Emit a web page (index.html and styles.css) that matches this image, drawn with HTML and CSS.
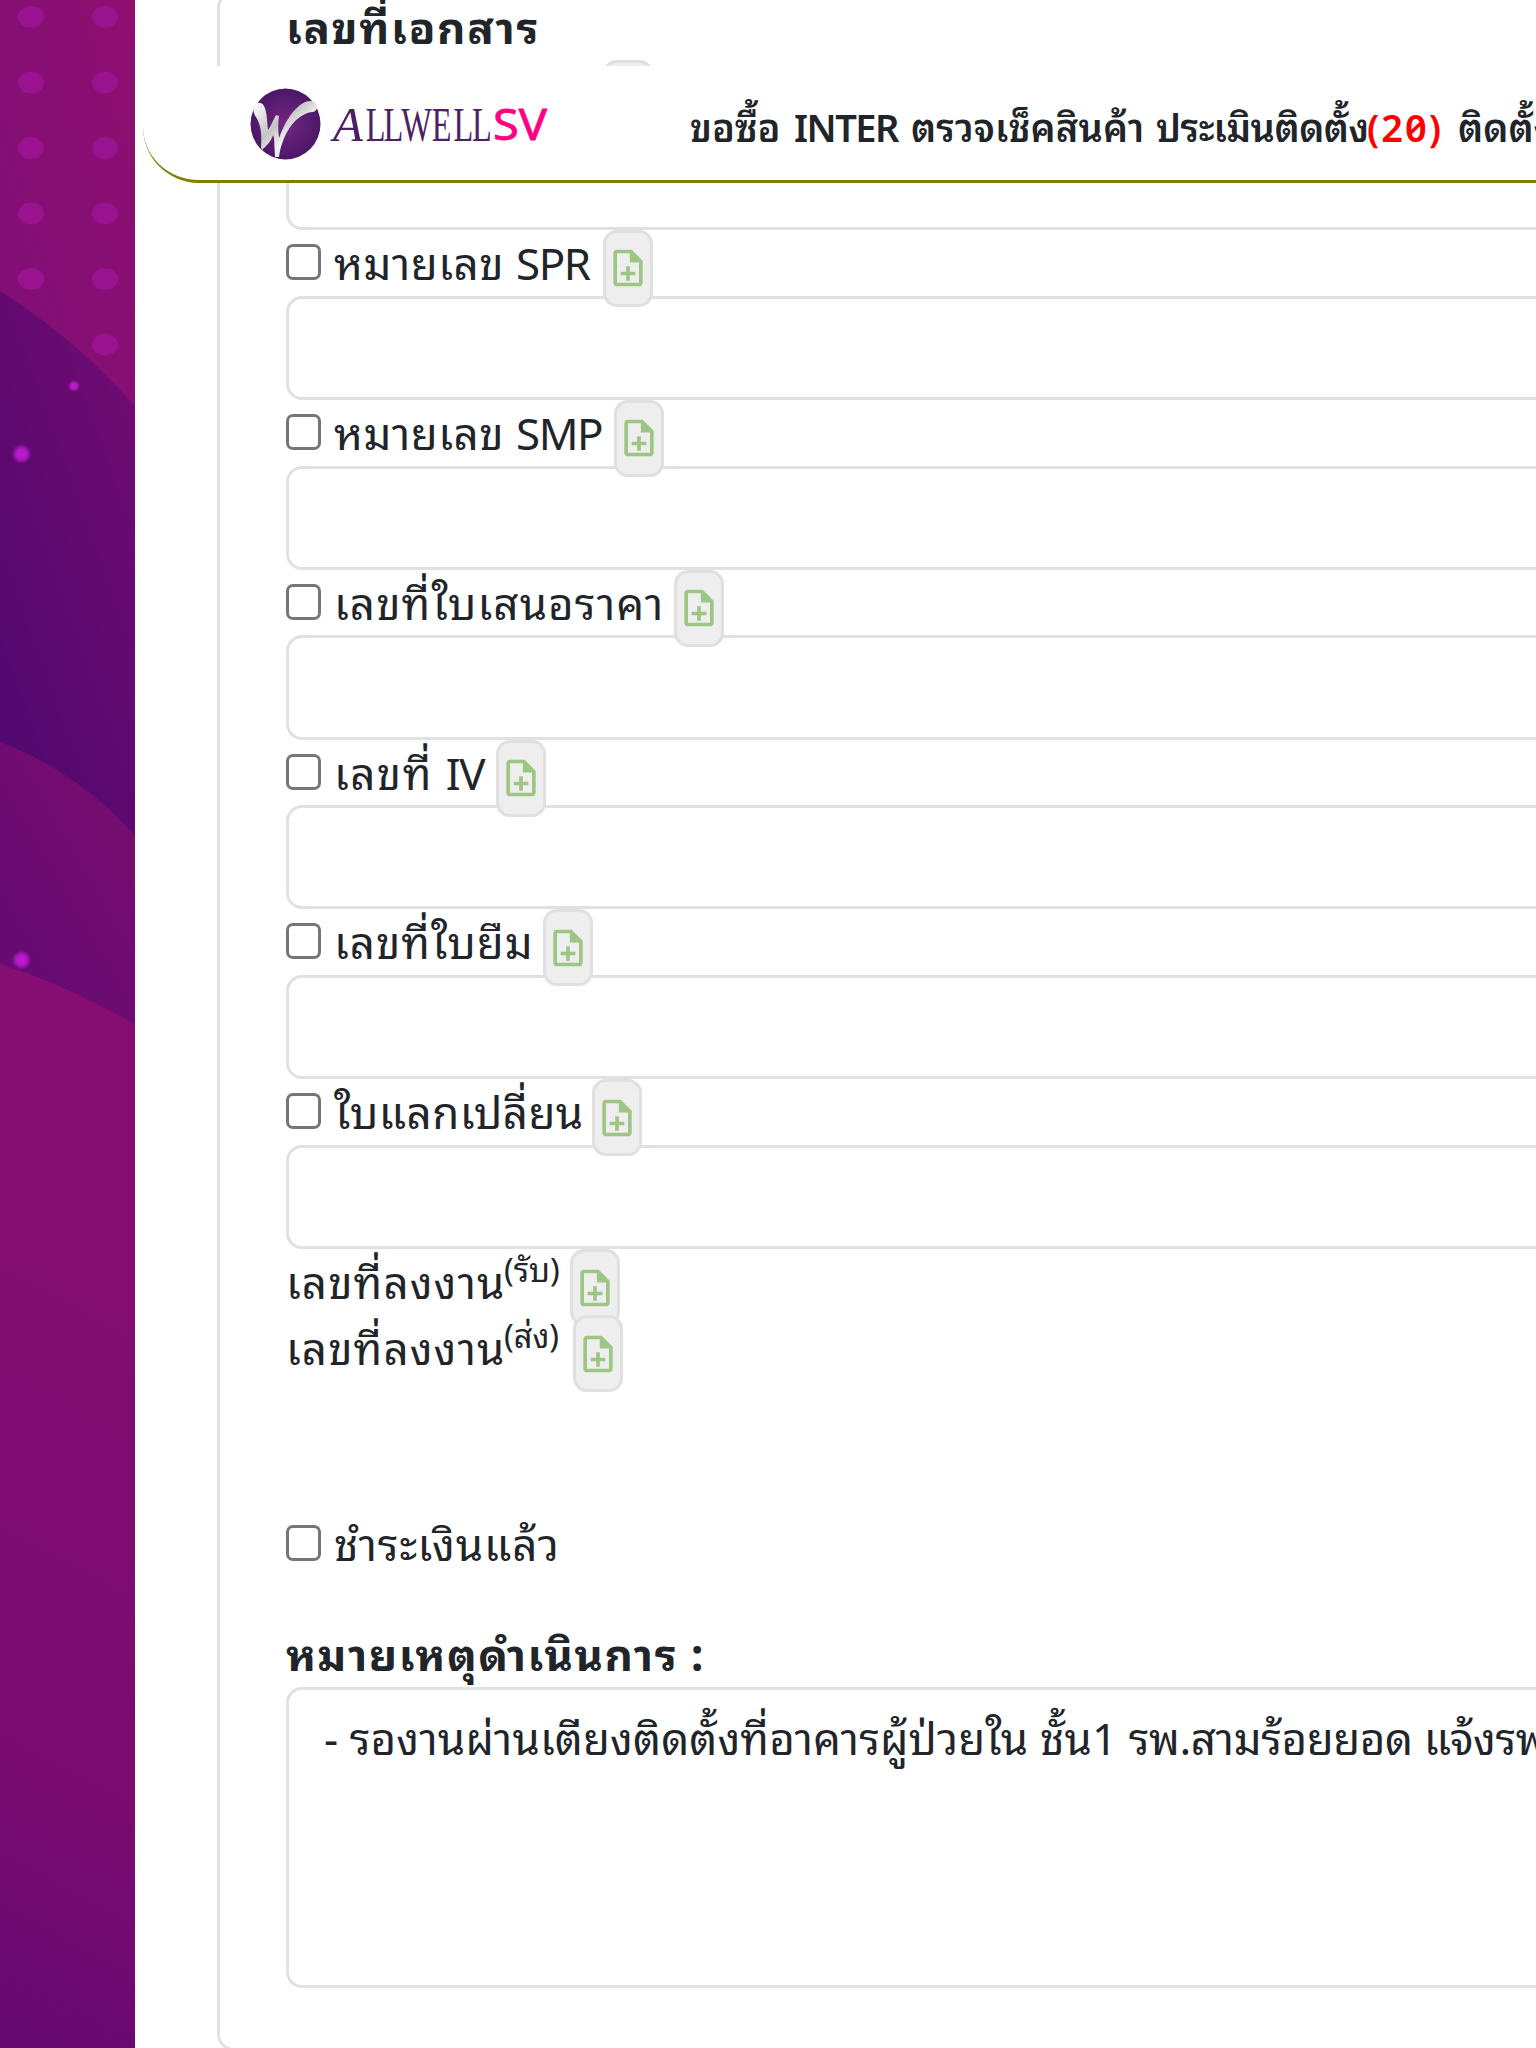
FILE: index.html
```html
<!DOCTYPE html>
<html lang="th">
<head>
<meta charset="utf-8">
<title>ALLWELL SV</title>
<link rel="stylesheet" href="styles.css">
</head>
<body>
<svg width="0" height="0" class="defs">
  <symbol id="note-add" viewBox="0 0 24 24"><path d="M13 11h-2v3H8v2h3v3h2v-3h3v-2h-3zM14 2H6C4.900 2 4 2.900 4 4v16c0 1.100.890 2 1.990 2H18c1.100 0 2-.9 2-2V8zM18 20H6V4h7v5h5z"/></symbol>
</svg>
<header class="topbar">
  <div class="brand">
    <svg class="brand-mark" viewBox="0 0 71 72">
      <defs>
        <radialGradient id="orb"><stop offset="0" stop-color="#752783"/><stop offset="1" stop-color="#4b1768"/></radialGradient>
        <linearGradient id="silver" x1="0" y1="0" x2="1" y2="1"><stop offset="0" stop-color="#fff"/><stop offset=".4" stop-color="#c4c4c4"/><stop offset=".6" stop-color="#f2f2f2"/><stop offset="1" stop-color="#bbb"/></linearGradient>
      </defs>
      <ellipse cx="35.500" cy="36" rx="35" ry="35.500" fill="url(#orb)"/>
      <path fill="url(#silver)" d="M4 17C7 14 12 14 14 18C17 24 17 32 18 42C21 38 23 32 26 27L29 28C28 35 28 43 29 50C35 34 43 20 55 14C60 12 64 13 66 16C68 19 67 23 63 24C48 25 33 42 29 69L25 69L24 50L23 47C21 54 16 58 12 62L11 59C12 47 11 37 6 29C3 25 3 20 4 17Z"/>
    </svg>
    <svg class="brand-name" viewBox="0 0 224 60"><text class="allwell slant" x="3" y="43">A</text><text class="allwell" transform="translate(0 43) scale(.66 1)" x="54 81 108 154 187 215">LLWELL</text><text class="sv" x="163" y="42" textLength="54" lengthAdjust="spacingAndGlyphs">SV</text></svg>
  </div>
  <nav class="menu">
    <a class="m1">ขอซื้อ</a><a class="m2">INTER</a><a class="m3">ตรวจเช็คสินค้า</a><a class="m4">ประเมินติดตั้ง</a><a class="m5">(20)</a><a class="m6">ติดตั้ง</a>
  </nav>
</header>
<div class="page">
  <svg class="side" viewBox="0 0 135 2048" preserveAspectRatio="none">
    <defs>
      <linearGradient id="g1" x1="0" y1="1" x2="1" y2="0"><stop offset="0" stop-color="#7e0f77"/><stop offset="1" stop-color="#8f0f70"/></linearGradient>
      <linearGradient id="g2" gradientUnits="userSpaceOnUse" x1="0" y1="700" x2="220" y2="620"><stop offset="0" stop-color="#52086f"/><stop offset="1" stop-color="#6f0c71"/></linearGradient>
      <linearGradient id="g3" gradientUnits="userSpaceOnUse" x1="0" y1="920" x2="120" y2="850"><stop offset="0" stop-color="#660b72"/><stop offset="1" stop-color="#750c70"/></linearGradient>
      <linearGradient id="g4" gradientUnits="userSpaceOnUse" x1="0" y1="2048" x2="400" y2="1300"><stop offset="0" stop-color="#650a72"/><stop offset=".3" stop-color="#790b70"/><stop offset="1" stop-color="#860e72"/></linearGradient>
      <radialGradient id="dot"><stop offset="0" stop-color="#c31bd0"/><stop offset=".5" stop-color="#b319c6"/><stop offset="1" stop-color="#b319c6" stop-opacity="0"/></radialGradient>
    </defs>
    <rect width="135" height="450" fill="url(#g1)"/>
    <g fill="#99128f">
      <ellipse cx="31" cy="17" rx="13" ry="11"/><ellipse cx="105" cy="17" rx="13" ry="11"/>
      <ellipse cx="31" cy="82.500" rx="13" ry="11"/><ellipse cx="105" cy="82.500" rx="13" ry="11"/>
      <ellipse cx="31" cy="148" rx="13" ry="11"/><ellipse cx="105" cy="148" rx="13" ry="11"/>
      <ellipse cx="31" cy="213.500" rx="13" ry="11"/><ellipse cx="105" cy="213.500" rx="13" ry="11"/>
      <ellipse cx="31" cy="279" rx="13" ry="11"/><ellipse cx="105" cy="279" rx="13" ry="11"/>
      <ellipse cx="105" cy="344.500" rx="13" ry="11"/>
    </g>
    <path d="M0 291Q75 338 135 406V900H0Z" fill="url(#g2)"/>
    <path d="M0 742Q75 770 135 835V1100H0Z" fill="url(#g3)"/>
    <path d="M0 964Q70 986 135 1025V2048H0Z" fill="url(#g4)"/>
    <g fill="url(#dot)"><circle cx="74" cy="386" r="6"/><circle cx="21.500" cy="454" r="10"/><circle cx="21.500" cy="960" r="10"/></g>
  </svg>
  <main class="card">
    <h2 class="title">เลขที่เอกสาร</h2>
    <div class="row"><span class="label covered"></span><button class="add"></button></div>
    <div class="field"></div>
    <div class="row"><input type="checkbox" class="check"><span class="label spr">หมายเลข <span class="latin">SPR</span></span><button class="add"><svg><use href="#note-add"/></svg></button></div>
    <div class="field"></div>
    <div class="row"><input type="checkbox" class="check"><span class="label smp">หมายเลข <span class="latin">SMP</span></span><button class="add"><svg><use href="#note-add"/></svg></button></div>
    <div class="field"></div>
    <div class="row"><input type="checkbox" class="check"><span class="label quote">เลขที่ใบเสนอราคา</span><button class="add"><svg><use href="#note-add"/></svg></button></div>
    <div class="field"></div>
    <div class="row"><input type="checkbox" class="check"><span class="label iv">เลขที่ <span class="latin">IV</span></span><button class="add"><svg><use href="#note-add"/></svg></button></div>
    <div class="field"></div>
    <div class="row"><input type="checkbox" class="check"><span class="label loan">เลขที่ใบยืม</span><button class="add"><svg><use href="#note-add"/></svg></button></div>
    <div class="field"></div>
    <div class="row"><input type="checkbox" class="check"><span class="label swap">ใบแลกเปลี่ยน</span><button class="add"><svg><use href="#note-add"/></svg></button></div>
    <div class="field"></div>
    <div class="row"><span class="label job">เลขที่ลงงาน</span><span class="sup recv">(รับ)</span><button class="add"><svg><use href="#note-add"/></svg></button></div>
    <div class="row"><span class="label job">เลขที่ลงงาน</span><span class="sup send">(ส่ง)</span><button class="add"><svg><use href="#note-add"/></svg></button></div>
    <div class="row paid"><input type="checkbox" class="check"><span class="label pay">ชำระเงินแล้ว</span></div>
    <h2 class="title remark-title">หมายเหตุดำเนินการ :</h2>
    <div class="field remark"><span class="remark-text">- รองานผ่านเตียงติดตั้งที่อาคารผู้ป่วยใน ชั้น1 <span class="tight">รพ.สามร้อยยอด แจ้งรพ</span></span></div>
  </main>
</div>
</body>
</html>
```
FILE: styles.css
```css
* { box-sizing: border-box; }
html, body { margin: 0; height: 2048px; overflow: hidden; }
body { background: #fff; color: #212529; font: 43.9px/66px "Noto Sans", "Noto Sans Thai Looped", "Noto Looped Thai", "Noto Sans Thai", sans-serif; }
.defs { position: absolute; }
.page { display: flex; height: 2048px; overflow: hidden; }
.side { flex: none; width: 135px; height: 2048px; }
.card { flex: none; width: 1500px; height: 2060px; margin: -9px 0 0 82px; padding: 0 66px; border: 3px solid #dee2e6; border-radius: 17px; }
.topbar { position: fixed; z-index: 10; left: 143px; top: 66px; width: 1500px; height: 117px; display: flex; align-items: flex-start; background: #fff; border-bottom: 3px solid olive; border-radius: 0 0 0 56px; }
.brand { flex: none; display: flex; width: 547px; padding: 22px 0 0 107px; }
.brand-mark { width: 71px; height: 72px; flex: none; }
.brand-name { width: 224px; height: 60px; margin-left: 9px; margin-top: 10px; flex: none; }
.allwell { font: 49px "Liberation Serif", serif; fill: #4d2065; }
.slant { font-style: italic; }
.sv { font: 44px "Noto Sans", sans-serif; fill: #ff0084; stroke: #ff0084; stroke-width: .8px; }
.menu { display: flex; padding-top: 28px; font-size: 38px; font-weight: 600; white-space: nowrap; }
.menu a { flex: none; }
.m1 { width: 104px; }
.m2 { width: 117px; letter-spacing: -1.5px; }
.m3 { width: 245px; letter-spacing: .1px; }
.m4 { width: 211px; letter-spacing: -.5px; }
.m5 { width: 91px; color: red; letter-spacing: 2px; font-feature-settings: "zero"; }
.title { margin: 0; height: 66px; font-size: 43.9px; line-height: 66px; font-weight: 700; letter-spacing: 1.65px; white-space: nowrap; }
.row { display: flex; height: 65.8px; white-space: nowrap; }
.check { appearance: none; flex: none; width: 35px; height: 36px; margin: 14px 13px 0 0; border: 3px solid #767676; border-radius: 7px; background: #fff; }
.label, .sup { flex: none; }
.latin { letter-spacing: -1.4px; }
.covered { width: 317px; }
.spr { width: 269px; letter-spacing: .5px; }
.smp { width: 280px; letter-spacing: .5px; }
.quote { width: 340px; letter-spacing: 1.1px; }
.iv { width: 162px; letter-spacing: 1.45px; }
.loan { width: 209px; letter-spacing: 1px; }
.swap { width: 258px; letter-spacing: .45px; }
.job { width: 218px; letter-spacing: 1.1px; }
.pay { letter-spacing: .9px; }
.sup { font-size: 32.5px; line-height: 42px; }
.recv { width: 66px; }
.send { width: 69px; }
.add { position: relative; z-index: 1; flex: none; display: flex; align-items: center; width: 50px; height: 77px; padding: 0; border: 3px solid #e0e0e0; border-radius: 14px; background: #eee; }
.add svg { width: 44px; height: 44px; fill: #9dc584; }
.field { height: 104.1px; border: 3px solid #dee2e6; border-radius: 16px; width: 1500px; background: #fff; }
.paid { margin-top: 130px; }
.remark-title { margin-top: 44px; letter-spacing: 1.5px; }
.remark { height: 301px; padding: 15px 35px; white-space: nowrap; letter-spacing: .12px; }
.tight { letter-spacing: -.4px; }
```
